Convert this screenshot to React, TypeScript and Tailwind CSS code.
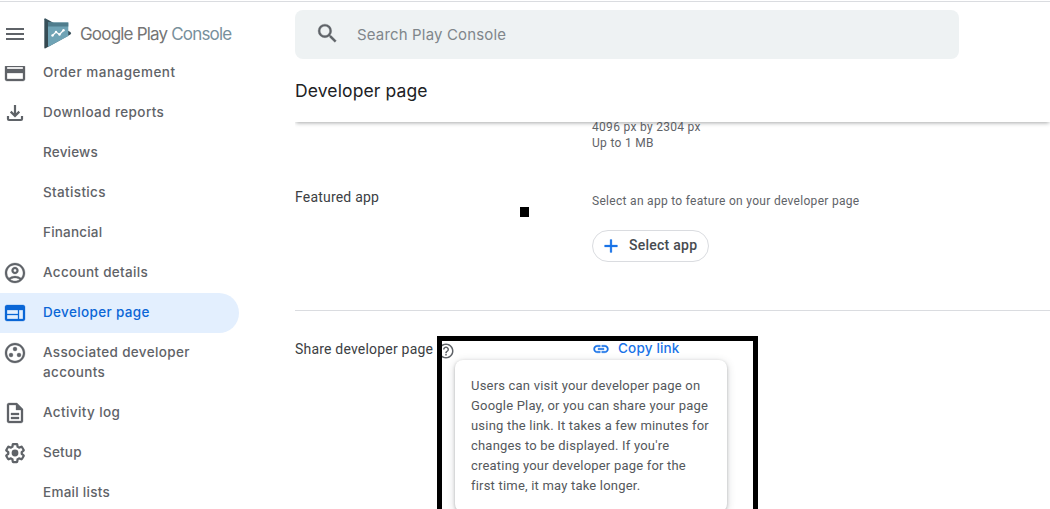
import React from "react";
import {
  MdAdd,
  MdCreditCard,
  MdHelpOutline,
  MdLink,
  MdMenu,
  MdOutlineAccountCircle,
  MdOutlineDescription,
  MdOutlineGroupWork,
  MdSearch,
  MdWeb,
} from "react-icons/md";

function DownloadIcon() {
  return (
    <svg viewBox="0 0 24 24" className="size-6" fill="none" stroke="currentColor" strokeWidth="2.2">
      <path d="M5 15v3q0 1 1 1h12q1 0 1-1v-3M12 4v11M7.7 10.6l4.3 4.3 4.3-4.3" />
    </svg>
  );
}

function GearIcon() {
  return (
    <svg viewBox="0 0 24 24" className="size-6">
      <path
        transform="translate(1.2 1.2) scale(.9)"
        fill="none"
        stroke="currentColor"
        strokeWidth="2.5"
        strokeLinejoin="round"
        d="M19.43 12.98c.04-.32.07-.64.07-.98 0-.34-.03-.66-.07-.98l2.11-1.65c.19-.15.24-.42.12-.64l-2-3.46c-.09-.16-.26-.25-.44-.25-.06 0-.12.01-.17.03l-2.49 1c-.52-.4-1.08-.73-1.69-.98l-.38-2.65C14.46 2.18 14.25 2 14 2h-4c-.25 0-.46.18-.49.42l-.38 2.65c-.61.25-1.17.59-1.69.98l-2.49-1c-.06-.02-.12-.03-.18-.03-.17 0-.34.09-.43.25l-2 3.46c-.13.22-.07.49.12.64l2.11 1.65c-.04.32-.07.65-.07.98 0 .33.03.66.07.98l-2.11 1.65c-.19.15-.24.42-.12.64l2 3.46c.09.16.26.25.44.25.06 0 .12-.01.17-.03l2.49-1c.52.4 1.08.73 1.69.98l.38 2.65c.03.24.24.42.49.42h4c.25 0 .46-.18.49-.42l.38-2.65c.61-.25 1.17-.59 1.69-.98l2.49 1c.06.02.12.03.18.03.17 0 .34-.09.43-.25l2-3.46c.12-.22.07-.49-.12-.64l-2.11-1.65z"
      />
      <circle cx="12" cy="12" r="3.4" fill="currentColor" />
    </svg>
  );
}

function ConsoleLogo() {
  return (
    <svg viewBox="0 0 28 31" className="-mt-px mr-[-1px] ml-px h-[31px] w-7 shrink-0">
      <defs>
        <linearGradient id="play" x1="0" y1="0" x2="0" y2="1">
          <stop offset="0" stopColor="#37525d" />
          <stop offset="1" stopColor="#34474f" />
        </linearGradient>
      </defs>
      <path d="M.3 1.2Q.5 0 1.6.5L26.4 14q1.6 1.2 0 2.6L1.6 30.3Q.3 30.8.3 29.5Z" fill="url(#play)" />
      <path d="M4 4.5h20.3V18L4 29Z" fill="#6fa3b5" />
      <path d="M4 4.5h20.3v4H4z" fill="#507d8d" />
      <path d="m8.5 17.5 3.5-3.5 3.5 2.5 4-4.3" fill="none" stroke="#fff" strokeWidth="1.3" />
      <g fill="#fff">
        <circle cx="8.5" cy="17.5" r="1.2" />
        <circle cx="12" cy="14" r="1.2" />
        <circle cx="15.5" cy="16.5" r="1.2" />
        <circle cx="19.5" cy="12.2" r="1.2" />
      </g>
    </svg>
  );
}

type Item = { label: string; icon?: React.ReactNode; active?: boolean; tracking: string };

const bold = "stroke-current stroke-[0.3] [&>[fill=none]]:stroke-none";

const items: Item[] = [
  { label: "Order management", icon: <MdCreditCard size={24} className={bold} />, tracking: "tracking-[0.48px]" },
  { label: "Download reports", icon: <DownloadIcon />, tracking: "tracking-[0.4px]" },
  { label: "Reviews", tracking: "tracking-[0.2px]" },
  { label: "Statistics", tracking: "tracking-[0.35px]" },
  { label: "Financial", tracking: "tracking-[0.2px]" },
  { label: "Account details", icon: <MdOutlineAccountCircle size={24} className={bold} />, tracking: "tracking-[0.32px]" },
  { label: "Developer page", icon: <MdWeb size={24} className={bold} />, active: true, tracking: "tracking-[0.35px]" },
  { label: "Associated developer accounts", icon: <MdOutlineGroupWork size={24} className={bold} />, tracking: "tracking-[0.34px]" },
  { label: "Activity log", icon: <MdOutlineDescription size={24} className={bold} />, tracking: "tracking-[0.4px]" },
  { label: "Setup", icon: <GearIcon />, tracking: "tracking-[0.2px]" },
  { label: "Email lists", tracking: "tracking-[0.27px]" },
];

function NavItem({ label, icon, active, tracking }: Item) {
  return (
    <a
      className={`flex min-h-10 w-[239px] shrink-0 items-start rounded-r-full pl-[3px] ${
        active ? "bg-[#e3effe] text-[#0b66d6]" : "text-[#5f6368]"
      }`}
    >
      <span className="mt-2 mr-4 size-6 shrink-0">{icon}</span>
      <span className={`w-[170px] pt-[9px] pb-[11px] text-[13.5px] leading-5 font-medium ${tracking}`}>{label}</span>
    </a>
  );
}

function Sidebar() {
  return (
    <aside className="flex w-[295px] shrink-0 flex-col">
      <div className="relative z-10 flex h-16 shrink-0 items-center bg-white pl-[3px]">
        <MdMenu size={24} className="mr-4 text-[#5f6368]" />
        <ConsoleLogo />
        <div className="-mt-px ml-[9px] text-[17px] leading-6 tracking-[-0.81px] whitespace-nowrap text-[#757575]">
          Google Play <span className="text-[#78909c]">Console</span>
        </div>
      </div>
      <nav className="-mt-[13px] flex min-h-0 flex-1 flex-col">
        {items.map((item) => (
          <NavItem key={item.label} {...item} />
        ))}
      </nav>
    </aside>
  );
}

export default function App() {
  return (
    <div className="relative flex h-[509px] w-[1050px] flex-col overflow-hidden bg-white font-['Inter',sans-serif]">
      <div className="mt-px h-px shrink-0 bg-[#dadce0]" />
      <div className="flex min-h-0 flex-1">
        <Sidebar />
        <main className="flex min-w-0 flex-1 flex-col">
          <header className="relative z-10 shrink-0 bg-white pt-2 shadow-[0_2px_4px_-1px_rgba(60,64,67,0.45)] [clip-path:inset(0_0_-8px_0)]">
            <div className="flex h-[49px] w-[664px] items-center rounded-lg bg-[#eef2f3] pl-5">
              <MdSearch size={25} className="-mt-[2px] stroke-current stroke-[0.3] text-[#5f6368] [&>[fill=none]]:stroke-none" />
              <span className="mt-px ml-[17px] text-[15px] tracking-[0.16px] text-[#80868b]">Search Play Console</span>
            </div>
            <h1 className="h-[63px] pt-5 text-[17.5px] leading-6 tracking-[0.12px] text-[#202124]">Developer page</h1>
          </header>
          <div className="-mt-[3px] font-['Roboto',sans-serif] text-[#5f6368]">
            <section className="grid grid-cols-[297px_1fr]">
              <p className="col-start-2 text-xs leading-4 tracking-[0.3px]">
                4096 px by 2304 px
                <br />
                Up to 1 MB
              </p>
            </section>
            <section className="grid grid-cols-[297px_1fr] border-b border-[#dadce0] pt-[36px] pb-12">
              <h2 className="text-sm leading-5 tracking-[0.2px] text-[#3c4043]">Featured app</h2>
              <div>
                <p className="pt-[6px] text-xs leading-4 tracking-[0.3px]">Select an app to feature on your developer page</p>
                <button className="mt-[21px] flex h-8 w-[117px] items-center rounded-full border border-[#dadce0] pl-2 text-sm font-medium tracking-[0.25px] text-[#474b4f]">
                  <MdAdd size={22} className="mr-[7px] -ml-px stroke-current stroke-[0.3] text-[#1a73e8] [&>[fill=none]]:stroke-none" />
                  <span className="-mt-[2px]">Select app</span>
                </button>
              </div>
            </section>
            <section className="grid grid-cols-[297px_1fr] items-start pt-[28px]">
              <h2 className="flex h-5 items-start text-sm leading-5 tracking-[0.2px] text-[#3c4043]">
                Share developer page
                <MdHelpOutline size={18} className="mt-[3px] ml-1 text-[#5f6368]" />
              </h2>
              <a className="-mt-px flex h-5 items-center font-['Inter',sans-serif] text-[13.5px] leading-5 font-medium tracking-[0.18px] text-[#1a73e8]">
                <MdLink size={18} className="mt-px mr-[8px] stroke-current stroke-[0.5] [&>[fill=none]]:stroke-none" />
                Copy link
              </a>
            </section>
          </div>
        </main>
      </div>
      <div className="absolute top-[207px] left-[520px] h-[10px] w-[9px] bg-black" />
      <div className="absolute top-[360px] left-[455px] w-[272px] rounded-lg bg-white p-4 font-['Roboto',sans-serif] text-[13px] leading-5 tracking-[0.2px] text-[#54585c] shadow-[0_1px_3px_rgba(60,64,67,0.3),0_2px_8px_rgba(60,64,67,0.22)]">
        Users can visit your developer page on
        <br />
        Google Play, or you can share your page
        <br />
        using the link. It takes a few minutes for
        <br />
        changes to be displayed. If you&apos;re
        <br />
        creating your developer page for the
        <br />
        first time, it may take longer.
      </div>
      <div className="absolute top-[336px] left-[437px] h-[200px] w-[321px] border-5 border-black" />
    </div>
  );
}
